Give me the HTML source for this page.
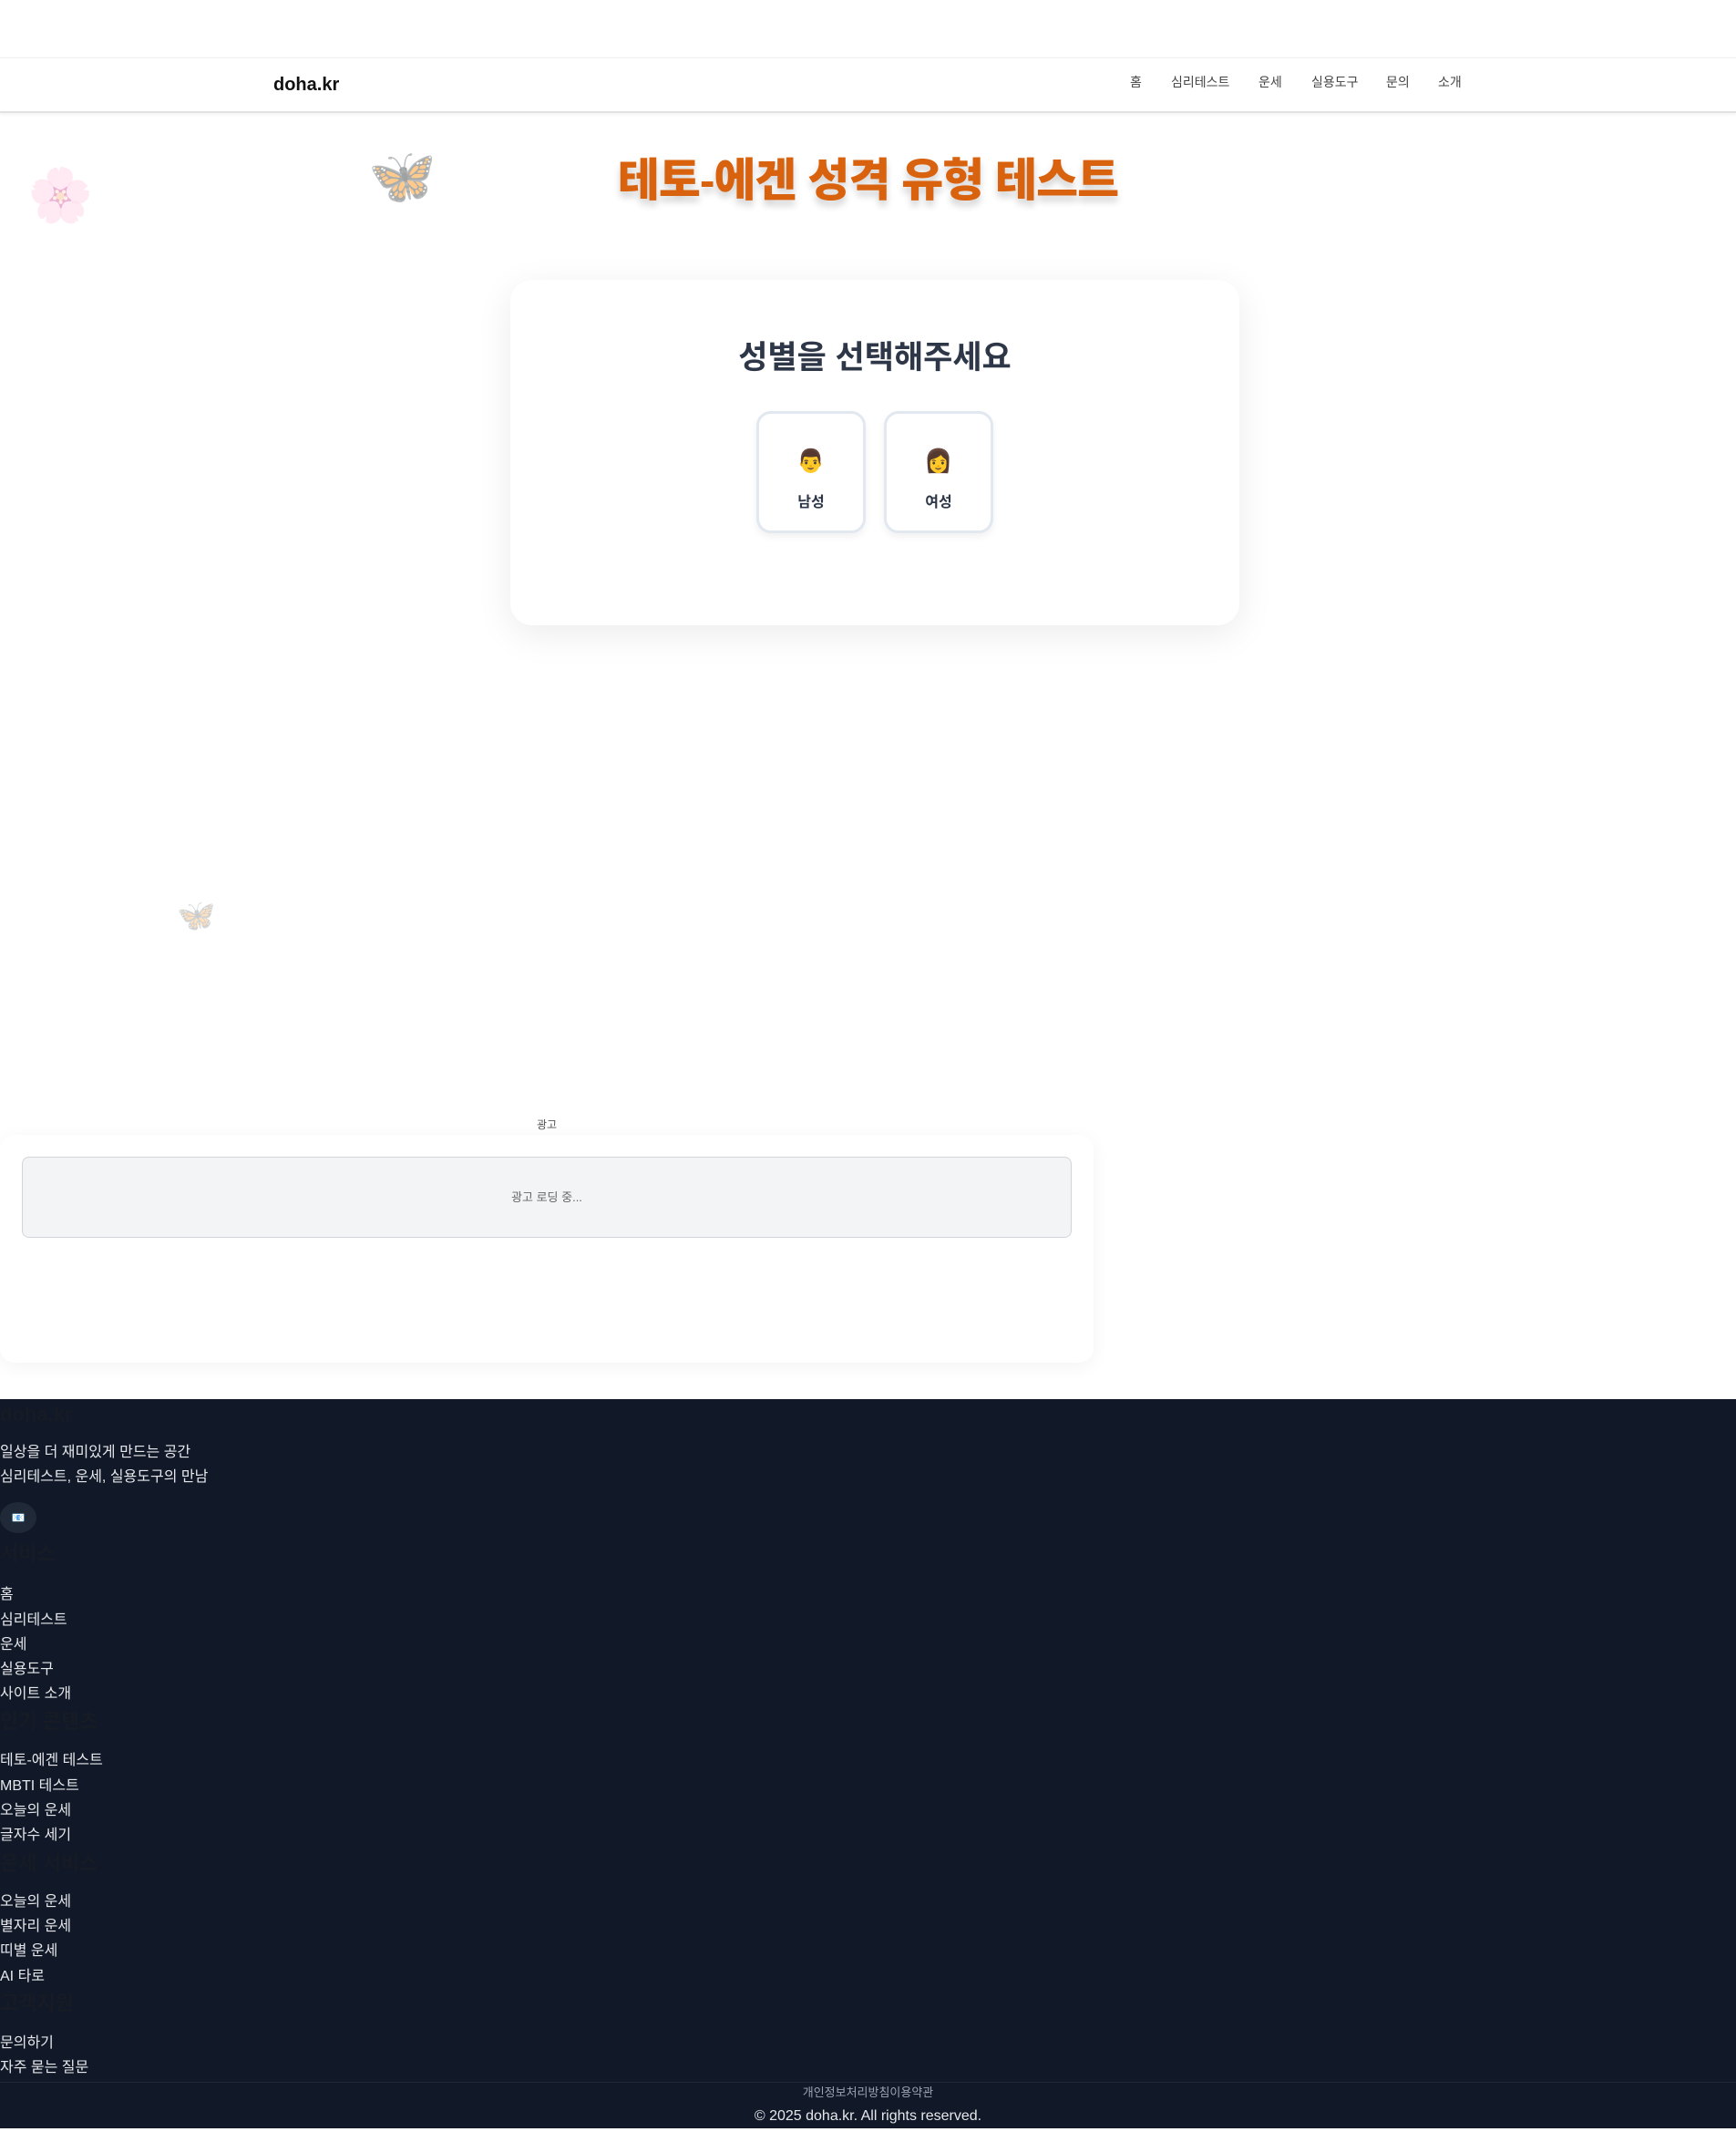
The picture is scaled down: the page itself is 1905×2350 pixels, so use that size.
<!DOCTYPE html>
<html lang="ko"><head><meta charset="utf-8">
<style>
*{margin:0;padding:0;box-sizing:border-box}
body{width:1905px;height:2350px;background:#fff;font-family:"Liberation Sans","Noto Sans CJK KR",sans-serif;position:relative;overflow:hidden}
.abs{position:absolute}
.hdr{left:0;top:63px;width:1905px;height:61px;border-top:1px solid #f1f1f1;border-bottom:2px solid #e2e2e2;box-shadow:0 2px 4px rgba(0,0,0,.05)}
.logo{left:300px;top:82px;font-size:20px;font-weight:bold;color:#111}
.nav{top:80px;font-size:14px;color:#444}
.title{left:0;width:1905px;top:158px;text-align:center;font-size:50px;font-weight:900;color:#d9620f;text-shadow:0 6px 8px rgba(0,0,0,.18);letter-spacing:-1px}
.card{left:560px;top:307px;width:800px;height:379px;border-radius:24px;background:#fff;box-shadow:0 10px 40px rgba(0,0,0,.08)}
.q{left:560px;width:800px;top:364px;text-align:center;font-size:35px;font-weight:bold;color:#2d3748}
.btn{top:451px;width:120px;height:134px;border:3px solid #e2e8f0;border-radius:16px;background:#fff;box-shadow:0 4px 8px rgba(0,0,0,.06);text-align:center}
.btn .e{font-size:25px;margin-top:36px;line-height:32px}
.btn .l{font-size:16px;font-weight:bold;color:#2d3748;margin-top:15px}
.adl{left:0;width:1200px;top:1225px;text-align:center;font-size:12px;color:#555}
.adc{left:0;top:1245px;width:1200px;height:250px;border-radius:16px;background:#fff;box-shadow:0 4px 20px rgba(0,0,0,.05)}
.adi{left:24px;top:1269px;width:1152px;height:89px;background:#f3f4f6;border:1px solid #d1d5db;border-radius:8px;text-align:center;line-height:87px;font-size:13px;color:#666}
.ft{left:0;top:1535px;width:1905px;height:800px;background:#111827}
.f{position:absolute;left:0;font-size:16px;color:#e5e7eb;line-height:20px}
.h{position:absolute;left:0;font-size:22px;font-weight:bold;color:#161b25}
</style></head><body>
<div class="abs hdr"></div>
<div class="abs logo">doha.kr</div>
<div class="abs nav" style="left:1240px">홈</div>
<div class="abs nav" style="left:1285px">심리테스트</div>
<div class="abs nav" style="left:1381px">운세</div>
<div class="abs nav" style="left:1439px">실용도구</div>
<div class="abs nav" style="left:1521px">문의</div>
<div class="abs nav" style="left:1578px">소개</div>

<div class="abs" style="left:30px;top:180px;font-size:58px;opacity:.3;line-height:70px">🌸</div>
<div class="abs" style="left:404px;top:158px;font-size:60px;opacity:.45;line-height:72px">🦋</div>
<div class="abs" style="left:194px;top:985px;font-size:34px;opacity:.25;line-height:40px">🦋</div>

<div class="abs title">테토-에겐 성격 유형 테스트</div>
<div class="abs card"></div>
<div class="abs q">성별을 선택해주세요</div>
<div class="abs btn" style="left:830px"><div class="e">👨</div><div class="l">남성</div></div>
<div class="abs btn" style="left:970px"><div class="e">👩</div><div class="l">여성</div></div>

<div class="abs adl">광고</div>
<div class="abs adc"></div>
<div class="abs adi">광고 로딩 중...</div>

<div class="abs ft">
<div class="h" style="top:4px">doha.kr</div>
<div class="f" style="top:49px">일상을 더 재미있게 만드는 공간</div>
<div class="f" style="top:76px">심리테스트, 운세, 실용도구의 만남</div>
<div style="position:absolute;left:0;top:113px;width:40px;height:34px;border-radius:50%;background:#1f2937;text-align:center;font-size:12px;line-height:34px">📧</div>
<div class="h" style="top:152px">서비스</div>
<div class="f" style="top:205px">홈</div>
<div class="f" style="top:233px">심리테스트</div>
<div class="f" style="top:260px">운세</div>
<div class="f" style="top:287px">실용도구</div>
<div class="f" style="top:314px">사이트 소개</div>
<div class="h" style="top:336px">인기 콘텐츠</div>
<div class="f" style="top:387px">테토-에겐 테스트</div>
<div class="f" style="top:415px">MBTI 테스트</div>
<div class="f" style="top:442px">오늘의 운세</div>
<div class="f" style="top:469px">글자수 세기</div>
<div class="h" style="top:492px">운세 서비스</div>
<div class="f" style="top:542px">오늘의 운세</div>
<div class="f" style="top:569px">별자리 운세</div>
<div class="f" style="top:596px">띠별 운세</div>
<div class="f" style="top:624px">AI 타로</div>
<div class="h" style="top:645px">고객지원</div>
<div class="f" style="top:697px">문의하기</div>
<div class="f" style="top:724px">자주 묻는 질문</div>
<div style="position:absolute;left:0;top:749px;width:1905px;border-top:1px solid #1f2937"></div>
<div style="position:absolute;left:0;width:1905px;top:751px;text-align:center;font-size:13px;color:#9ca3af;line-height:20px">개인정보처리방침이용약관</div>
<div style="position:absolute;left:0;width:1905px;top:776px;text-align:center;font-size:16px;color:#e5e7eb;line-height:22px">© 2025 doha.kr. All rights reserved.</div>
</div>
</body></html>
